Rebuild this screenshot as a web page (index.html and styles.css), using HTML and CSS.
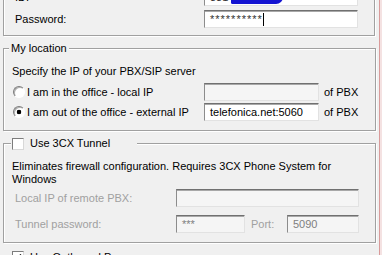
FILE: index.html
```html
<!DOCTYPE html>
<html lang="en">
<head>
    <meta charset="UTF-8">
    <meta name="viewport" content="width=device-width, initial-scale=1.0">
    <title>3CX Phone - Connection settings</title>
    <link rel="stylesheet" href="styles.css">
</head>
<body>
    <div class="screen">
        <div class="panel">
            <!-- Account (scrolled partly out of view) -->
            <div class="box account">
                <div class="row">
                    <span class="label">ID:</span>
                    <div class="field id-field">3314<span class="scribble"></span></div>
                </div>
                <div class="row">
                    <span class="label">Password:</span>
                    <div class="field"><span class="secret">**********</span><span class="caret"></span></div>
                </div>
            </div>

            <fieldset class="group location">
                <legend>My location</legend>
                <p class="hint">Specify the IP of your PBX/SIP server</p>
                <div class="choice">
                    <label class="option"><span class="radio"></span>I am in the office - local IP</label>
                    <div class="field off"></div>
                    <span class="unit">of PBX</span>
                </div>
                <div class="choice">
                    <label class="option"><span class="radio on"></span>I am out of the office - external IP</label>
                    <div class="field">telefonica.net:5060</div>
                    <span class="unit">of PBX</span>
                </div>
            </fieldset>

            <fieldset class="group tunnel">
                <legend><span class="check"></span>Use 3CX Tunnel</legend>
                <p class="hint">Eliminates firewall configuration. Requires 3CX Phone System for<br>Windows</p>
                <div class="pair">
                    <span class="muted">Local IP of remote PBX:</span>
                    <div class="field off wide"></div>
                </div>
                <div class="pair">
                    <span class="muted">Tunnel password:</span>
                    <div class="field off short">***</div>
                    <span class="muted port">Port:</span>
                    <div class="field off port-field">5090</div>
                </div>
            </fieldset>

            <label class="option outbound"><span class="check on"></span>Use Outbound Proxy</label>
        </div>
        <div class="edge"></div>
    </div>
</body>
</html>
```

FILE: styles.css
```css
/* Classic Windows dialog look */
body {
    margin: 0;
    background: #f0f0f0;
    font-family: "Liberation Sans", Arial, sans-serif;
    font-size: 11px;
    color: #000;
    overflow: hidden;
}

.screen {
    display: flex;
    height: 255px;
    overflow: hidden;
}

.panel {
    flex: none;
    width: 379px;
    padding-left: 3px;
    box-sizing: border-box;
}

.edge {
    flex: 1;
    border-left: 1px solid #d99a9a;
    background: #f4e2e2;
}

/* group boxes */
.box, .group {
    border: 1px solid #a0a0a0;
    box-shadow: inset 1px 1px 0 #fff, 1px 1px 0 #fff;
}

.account {
    width: 372px;
    box-sizing: border-box;
    margin-top: -20px;
    padding: 7px 16px 7px 11px;
    display: flex;
    flex-direction: column;
    gap: 4px;
}

.account .row {
    display: flex;
    align-items: center;
    height: 18px;
}

.account .label {
    width: 189px;
    flex: none;
}

.account .field {
    width: 154px;
}

.group {
    width: 373px;
    min-width: 0;
    box-sizing: border-box;
    margin: 6px 0 0;
    padding: 10px 8px 9px;
}

.group legend {
    background: #f0f0f0;
    line-height: 13px;
    padding: 0 2px;
    margin-left: -3px;
}

.hint {
    margin: 0;
    line-height: 13px;
}

/* inputs */
.field {
    flex: none;
    height: 18px;
    box-sizing: border-box;
    border: 1px solid;
    border-color: #707070 #e2e2e2 #e2e2e2 #8c8c8c;
    box-shadow: inset 0 1px 0 #a8a8a8;
    background: #fff;
    padding: 0 5px;
    line-height: 16px;
    white-space: nowrap;
    overflow: hidden;
}

.field.off {
    background: #f5f5f5;
    color: #808080;
}

.id-field {
    position: relative;
    color: #333;
}

.scribble {
    position: absolute;
    left: 26px;
    top: 8px;
    width: 52px;
    height: 7px;
    background: #1414d2;
    border-radius: 0 0 9px 2px;
}

.secret {
    letter-spacing: 1px;
    color: #333;
}

.caret {
    display: inline-block;
    width: 1px;
    height: 13px;
    margin-left: 0;
    vertical-align: -3px;
    background: #000;
}

/* location */
.location .hint {
    margin-bottom: 5px;
}

.choice {
    display: flex;
    align-items: center;
    height: 18px;
}

.choice + .choice {
    margin-top: 2px;
}

.option {
    display: flex;
    align-items: center;
    gap: 2px;
    width: 192px;
    flex: none;
}

.choice .field {
    width: 115px;
}

.unit {
    margin-left: 5px;
}

.radio {
    width: 12px;
    height: 12px;
    margin-left: 1px;
    box-sizing: border-box;
    border-radius: 50%;
    border: 1px solid;
    border-color: #7c7c7c #fff #fff #7c7c7c;
    box-shadow: inset 1px 1px 0 #b0b0b0;
    background: #fff;
}

.radio.on {
    background: radial-gradient(circle, #000 0 2px, #fff 2.6px);
}

.check {
    display: inline-block;
    width: 12px;
    height: 12px;
    box-sizing: border-box;
    border: 1px solid;
    border-color: #7c7c7c #d8d8d8 #d8d8d8 #7c7c7c;
    background: #fff;
}

.check.on {
    background: #fff url("data:image/svg+xml,%3Csvg xmlns='http://www.w3.org/2000/svg' width='10' height='10'%3E%3Cpath d='M2 4.5l2 2 4-4' fill='none' stroke='%23000' stroke-width='1.6'/%3E%3C/svg%3E") no-repeat center;
}

/* tunnel */
.tunnel legend {
    display: flex;
    align-items: center;
    gap: 6px;
    padding: 0 27px 0 1px;
    margin-left: -1px;
}

.tunnel .hint {
    margin-bottom: 3px;
}

.pair {
    display: flex;
    align-items: center;
    height: 18px;
}

.pair + .pair {
    margin-top: 8px;
}

.muted {
    color: #a0a0a0;
}

.pair > .muted:first-child {
    width: 164px;
    flex: none;
    padding-left: 3px;
    box-sizing: border-box;
}

.wide {
    width: 183px;
}

.short {
    width: 69px;
}

.port {
    margin-left: 6px;
    width: 36px;
}

.port-field {
    width: 72px;
}

.outbound {
    margin: 8px 0 0 9px;
    gap: 6px;
    width: auto;
}
```
